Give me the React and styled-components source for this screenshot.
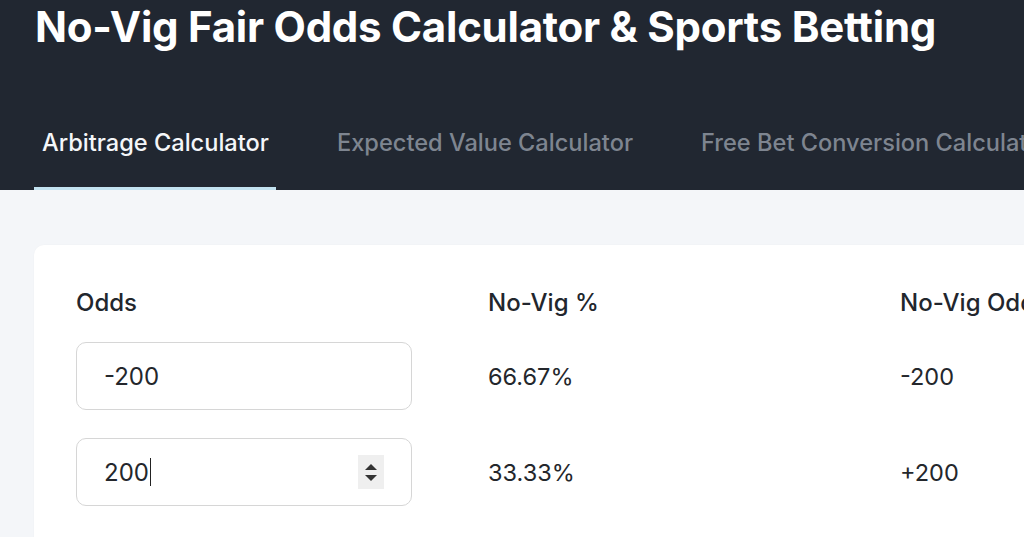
import { Fragment } from "react";
import styled, { createGlobalStyle } from "styled-components";

const GlobalStyle = createGlobalStyle`
  html, body {
    margin: 0;
    padding: 0;
    background: #f4f6f9;
    font-family: Inter, "Noto Sans", sans-serif;
    overflow: hidden;
  }
`;

const Header = styled.header`
  background: #212731;
  padding: 0 0 0 34px;
  display: flex;
  flex-direction: column;
`;

const Title = styled.h1`
  margin: 0;
  padding: 2px 0 0 1px;
  height: 50px;
  color: #ffffff;
  font-size: 42px;
  font-weight: 700;
  line-height: 50px;
  white-space: nowrap;
  letter-spacing: -0.25px;
`;

const Tabs = styled.nav`
  display: flex;
  gap: 53px;
  margin-top: 55px;
  white-space: nowrap;
`;

const Tab = styled.div`
  box-sizing: border-box;
  padding: 0 7px 10px 8px;
  height: 83px;
  display: flex;
  align-items: center;
  font-size: 23.6px;
  font-weight: 500;
  color: ${(p) => (p.$active ? "#f4f6f9" : "#7e8590")};
  border-bottom: 3px solid ${(p) => (p.$active ? "#c2e2f0" : "transparent")};
`;

const Main = styled.main`
  padding: 55px 0 0 34px;
`;

const Card = styled.section`
  background: #ffffff;
  border-radius: 10px 0 0 0;
  padding: 40px 0 40px 42px;
  box-shadow: 0 0 2px rgba(0, 0, 0, 0.03);
`;

const Grid = styled.div`
  display: grid;
  grid-template-columns: 412px 412px 412px;
  row-gap: 28px;
  align-items: center;
`;

const Label = styled.div`
  font-size: 24px;
  font-weight: 500;
  color: #22262d;
  height: 36px;
  line-height: 36px;
  margin-bottom: -7px;
  white-space: nowrap;
`;

const Field = styled.div`
  box-sizing: border-box;
  width: 336px;
  height: 68px;
  border: 1.5px solid #d6d6d6;
  border-radius: 10px;
  padding: 0 27px;
  display: flex;
  align-items: center;
  justify-content: space-between;
  font-size: 24px;
  color: #24272c;
`;

const Caret = styled.span`
  display: inline-block;
  width: 1.5px;
  height: 28px;
  background: #222;
  vertical-align: middle;
  margin-left: 1px;
  margin-top: -3px;
`;

const Spinner = styled.div`
  width: 26px;
  height: 34px;
  background: #efefef;
  display: flex;
  flex-direction: column;
  align-items: center;
  justify-content: center;
  gap: 5px;
`;

const Arrow = styled.div`
  width: 0;
  height: 0;
  border-left: 6px solid transparent;
  border-right: 6px solid transparent;
  ${(p) =>
    p.$up ? "border-bottom: 6px solid #333;" : "border-top: 6px solid #333;"}
`;

const Value = styled.div`
  font-size: 23.5px;
  color: #24272c;
  white-space: nowrap;
`;

const rows = [
  { odds: "-200", pct: "66.67%", fair: "-200" },
  { odds: "200", pct: "33.33%", fair: "+200", active: true },
];

export default function App() {
  return (
    <>
      <GlobalStyle />
      <Header>
        <Title>No-Vig Fair Odds Calculator &amp; Sports Betting</Title>
        <Tabs>
          <Tab $active>Arbitrage Calculator</Tab>
          <Tab>Expected Value Calculator</Tab>
          <Tab>Free Bet Conversion Calculator</Tab>
        </Tabs>
      </Header>
      <Main>
        <Card>
          <Grid>
            <Label>Odds</Label>
            <Label>No-Vig %</Label>
            <Label>No-Vig Odds</Label>
            {rows.map((r) => (
              <Fragment key={r.odds}>
                <Field>
                  <span>
                    {r.odds}
                    {r.active && <Caret />}
                  </span>
                  {r.active && (
                    <Spinner>
                      <Arrow $up />
                      <Arrow />
                    </Spinner>
                  )}
                </Field>
                <Value>{r.pct}</Value>
                <Value>{r.fair}</Value>
              </Fragment>
            ))}
          </Grid>
        </Card>
      </Main>
    </>
  );
}
